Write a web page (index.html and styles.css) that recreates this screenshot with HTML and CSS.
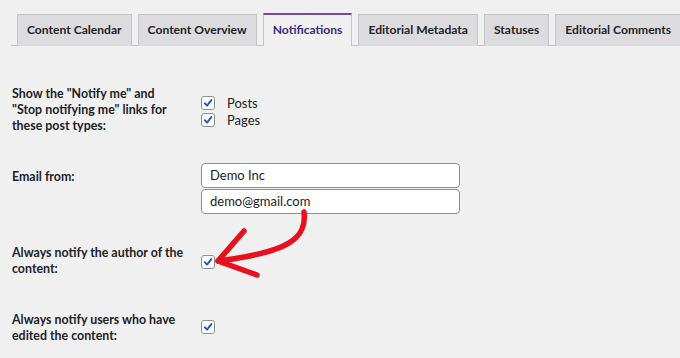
FILE: index.html
```html
<!DOCTYPE html>
<html>
<head>
<meta charset="utf-8">
<link rel="stylesheet" href="styles.css">
</head>
<body>
<div class="page">
  <nav class="tabs">
    <span class="tab">Content Calendar</span>
    <span class="tab">Content Overview</span>
    <span class="tab active">Notifications</span>
    <span class="tab">Editorial Metadata</span>
    <span class="tab">Statuses</span>
    <span class="tab">Editorial Comments</span>
  </nav>
  <div class="form">
    <div class="row row-types">
      <div class="label">Show the "Notify me" and "Stop notifying me" links for these post types:</div>
      <div class="field">
        <label class="check"><span class="box"><svg viewBox="0 0 14 14"><path d="M3.2 7.2 L5.9 10 L10.9 3.6"/></svg></span>Posts</label>
        <label class="check"><span class="box"><svg viewBox="0 0 14 14"><path d="M3.2 7.2 L5.9 10 L10.9 3.6"/></svg></span>Pages</label>
      </div>
    </div>
    <div class="row row-email">
      <div class="label">Email from:</div>
      <div class="field inputs">
        <div class="input">Demo Inc</div>
        <div class="input">demo@gmail.com</div>
      </div>
    </div>
    <div class="row row-author">
      <div class="label">Always notify the author of the content:</div>
      <div class="field">
        <span class="box"><svg viewBox="0 0 14 14"><path d="M3.2 7.2 L5.9 10 L10.9 3.6"/></svg></span>
      </div>
    </div>
    <div class="row row-users">
      <div class="label">Always notify users who have edited the content:</div>
      <div class="field">
        <span class="box"><svg viewBox="0 0 14 14"><path d="M3.2 7.2 L5.9 10 L10.9 3.6"/></svg></span>
      </div>
    </div>
  </div>
  <svg class="arrow" width="680" height="358" viewBox="0 0 680 358">
    <path d="M304 212 C307 238 290 252 218 261" />
    <path d="M244 231 L218 261 L257 275" />
  </svg>
</div>
</body>
</html>
```
FILE: styles.css
```css
* { box-sizing: border-box; }
html, body { margin: 0; padding: 0; }
body {
  background: #f0f0f1;
  font-family: "Lato", "Open Sans", sans-serif;
  font-size: 13px;
  color: #1d2327;
  width: 680px;
  height: 358px;
  overflow: hidden;
}
.page { position: relative; width: 680px; height: 358px; }
.tabs {
  display: flex;
  gap: 6px;
  margin: 0 0 0 11px;
  padding: 14px 0 0 6px;
  border-bottom: 1px solid #c3c4c7;
  height: 46px;
  align-items: flex-end;
}
.tab {
  display: block;
  height: 32px;
  line-height: 30px;
  padding: 0 9px;
  background: #dcdcde;
  border: 1px solid #c3c4c7;
  border-bottom: none;
  font-weight: 700;
  font-size: 12.1px;
  white-space: nowrap;
  margin-bottom: -1px;
}
.tab.active {
  background: #f0f0f1;
  border-top: 2px solid #6f4dab;
  color: #3c2a7a;
  height: 33px;
  line-height: 30px;
}
.form { padding: 0 0 0 12px; }
.row { display: flex; }
.label {
  width: 189px;
  flex: none;
  font-weight: 700;
  font-size: 12.4px;
  line-height: 16px;
  padding-right: 16px;
}
.field { display: flex; flex-direction: column; }
.row-types { margin-top: 40px; }
.row-types .field { padding-top: 8px; }
.check { display: flex; align-items: center; height: 17px; gap: 12px; font-size: 13px; }
.box {
  width: 14px; height: 14px;
  border: 1px solid #8c8f94;
  border-radius: 3px;
  background: #fff;
  display: inline-block;
  flex: none;
}
.box svg { display: block; width: 12px; height: 12px; }
.box path { fill: none; stroke: #1e5bbf; stroke-width: 2.3; stroke-linecap: round; stroke-linejoin: round; }
.row-email { margin-top: 29px; }
.row-email .label { padding-top: 6px; }
.inputs { gap: 1px; }
.input {
  width: 259px;
  height: 25px;
  border: 1px solid #8c8f94;
  border-radius: 4px;
  background: #fff;
  padding: 0 8px;
  line-height: 23px;
  font-size: 13px;
}
.row-author { margin-top: 31px; }
.row-author .field { padding-top: 10px; }
.row-users { margin-top: 35px; }
.row-users .field { padding-top: 8px; }
.arrow { position: absolute; left: 0; top: 0; pointer-events: none; }
.arrow path { fill: none; stroke: #e8101c; stroke-width: 5.5; stroke-linecap: round; stroke-linejoin: round; }
```
